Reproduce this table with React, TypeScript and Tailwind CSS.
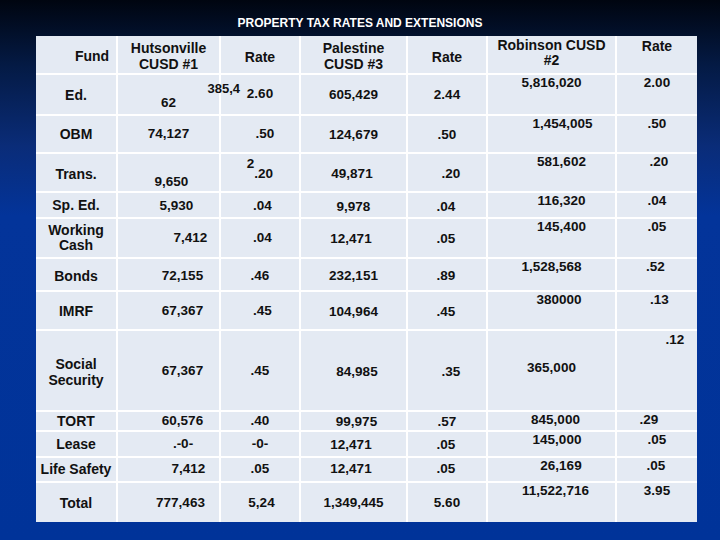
import type { ReactNode } from "react";

type Cell = { t: ReactNode; c: string };

// label cells (first column / headers) and number cells
const L = (t: ReactNode, c: string): Cell => ({ t, c: "justify-center items-start text-center text-[14px] leading-[16px] " + c });
const N = (t: ReactNode, c: string): Cell => ({ t, c: "justify-center items-start text-[13.5px] leading-[16px] " + c });

const rows: Cell[][] = [
  [
    L("Fund", "pt-[12px] pl-[32px]"),
    L(<>Hutsonville<br />CUSD #1</>, "pt-[4px]"),
    L("Rate", "pt-[13px]"),
    L(<>Palestine<br />CUSD #3</>, "pt-[4px]"),
    L("Rate", "pt-[13px]"),
    { t: <>Robinson CUSD<br />#2</>, c: "justify-center items-start text-center text-[14px] leading-[15px] pt-[2px]" },
    L("Rate", "pt-[2px]"),
  ],
  [
    L("Ed.", "pt-[12px]"),
    {
      t: (
        <>
          <span className="self-end -mr-[21px] relative z-10 text-[13px]">385,4</span>
          <span className="-mt-[2px]">62</span>
        </>
      ),
      c: "flex-col items-center text-[13.5px] leading-[16px] pt-[6px]",
    },
    N("2.60", "pt-[11px]"),
    N("605,429", "pt-[12px]"),
    N("2.44", "pt-[12px]"),
    N("5,816,020", "pt-[0px]"),
    N("2.00", "pt-[0px]"),
  ],
  [
    L("OBM", "pt-[10px]"),
    N("74,127", "pt-[10px]"),
    N(".50", "pt-[10px] pl-[10px]"),
    N("124,679", "pt-[11px]"),
    N(".50", "pt-[11px]"),
    N("1,454,005", "pt-[0px] pl-[22px]"),
    N(".50", "pt-[0px]"),
  ],
  [
    L("Trans.", "pt-[12px]"),
    N("9,650", "pt-[20px] pl-[6px]"),
    N(
      <>
        <span>2</span>
        <span className="mt-[10px]">.20</span>
      </>,
      "pt-[2px]"
    ),
    N("49,871", "pt-[12px] pr-[3px]"),
    N(".20", "pt-[12px] pl-[8px]"),
    N("581,602", "pt-[0px] pl-[20px]"),
    N(".20", "pt-[0px] pl-[4px]"),
  ],
  [
    L("Sp. Ed.", "pt-[4px]"),
    N("5,930", "pt-[5px] pl-[16px]"),
    N(".04", "pt-[5px] pl-[5px]"),
    N("9,978", "pt-[6px]"),
    N(".04", "pt-[6px] pr-[2px]"),
    N("116,320", "pt-[0px] pl-[20px]"),
    N(".04", "pt-[0px]"),
  ],
  [
    { t: <>Working<br />Cash</>, c: "justify-center items-start text-center text-[14px] leading-[15px] pt-[4px]" },
    N("7,412", "pt-[11px] pl-[44px]"),
    N(".04", "pt-[11px] pl-[5px]"),
    N("12,471", "pt-[12px] pr-[5px]"),
    N(".05", "pt-[12px] pr-[2px]"),
    N("145,400", "pt-[0px] pl-[20px]"),
    N(".05", "pt-[0px]"),
  ],
  [
    L("Bonds", "pt-[9px]"),
    N("72,155", "pt-[9px] pl-[28px]"),
    N(".46", "pt-[9px]"),
    N("232,151", "pt-[9px]"),
    N(".89", "pt-[9px] pr-[2px]"),
    N("1,528,568", "pt-[0px]"),
    N(".52", "pt-[0px] pr-[3px]"),
  ],
  [
    L("IMRF", "pt-[11px]"),
    N("67,367", "pt-[11px] pl-[28px]"),
    N(".45", "pt-[11px] pl-[5px]"),
    N("104,964", "pt-[12px]"),
    N(".45", "pt-[12px] pr-[2px]"),
    N("380000", "pt-[0px] pl-[15px]"),
    N(".13", "pt-[0px] pl-[5px]"),
  ],
  [
    L(<>Social<br />Security</>, "pt-[25px]"),
    N("67,367", "pt-[32px] pl-[28px]"),
    N(".45", "pt-[32px]"),
    N("84,985", "pt-[33px] pl-[7px]"),
    N(".35", "pt-[33px] pl-[8px]"),
    N("365,000", "pt-[29px]"),
    N(".12", "pt-[1px] pl-[36px]"),
  ],
  [
    L("TORT", "pt-[1px]"),
    N("60,576", "pt-[1px] pl-[28px]"),
    N(".40", "pt-[1px]"),
    N("99,975", "pt-[2px] pl-[6px]"),
    N(".57", "pt-[2px]"),
    N("845,000", "pt-[0px] pl-[8px]"),
    N(".29", "pt-[0px] pr-[16px]"),
  ],
  [
    L("Lease", "pt-[4px]"),
    N(".-0-", "pt-[4px] pl-[29px]"),
    N("-0-", "pt-[4px]"),
    N("12,471", "pt-[5px] pr-[5px]"),
    N(".05", "pt-[5px] pr-[2px]"),
    N("145,000", "pt-[0px] pl-[11px]"),
    N(".05", "pt-[0px]"),
  ],
  [
    L("Life Safety", "pt-[3px]"),
    N("7,412", "pt-[3px] pl-[40px]"),
    N(".05", "pt-[3px]"),
    N("12,471", "pt-[3px] pr-[5px]"),
    N(".05", "pt-[3px] pr-[2px]"),
    N("26,169", "pt-[0px] pl-[19px]"),
    N(".05", "pt-[0px] pr-[2px]"),
  ],
  [
    L("Total", "pt-[12px]"),
    N("777,463", "pt-[12px] pl-[24px]"),
    N("5,24", "pt-[12px] pl-[3px]"),
    N("1,349,445", "pt-[12px]"),
    N("5.60", "pt-[12px]"),
    N("11,522,716", "pt-[0px] pl-[8px]"),
    N("3.95", "pt-[0px]"),
  ],
];

export default function App() {
  return (
    <div className="w-[720px] h-[540px] overflow-hidden flex flex-col font-['Liberation_Sans',Arial,sans-serif] bg-[linear-gradient(to_bottom,#000510_0%,#041a44_12%,#0a2c78_27%,#03349a_40%,#003399_100%)]">
      <div className="h-[36px] flex justify-center items-start pt-[17px]">
        <h1 className="text-[12px] leading-[12px] font-bold text-white whitespace-nowrap">
          PROPERTY TAX RATES AND EXTENSIONS
        </h1>
      </div>

      <div className="pl-[36px]">
        <div className="w-[661px] h-[486px] grid grid-cols-[80px_101px_78px_105px_78px_127px_80px] grid-rows-[37px_39px_36px_37px_24px_38px_31px_37px_79px_18px_24px_23px_39px] gap-[2px] bg-white">
          {rows.flatMap((row, r) =>
            row.map((cell, i) => (
              <div
                key={r + "-" + i}
                className={"flex bg-[#e4eaf3] text-[#111] font-bold whitespace-nowrap " + cell.c}
              >
                {cell.t}
              </div>
            ))
          )}
        </div>
      </div>
    </div>
  );
}
